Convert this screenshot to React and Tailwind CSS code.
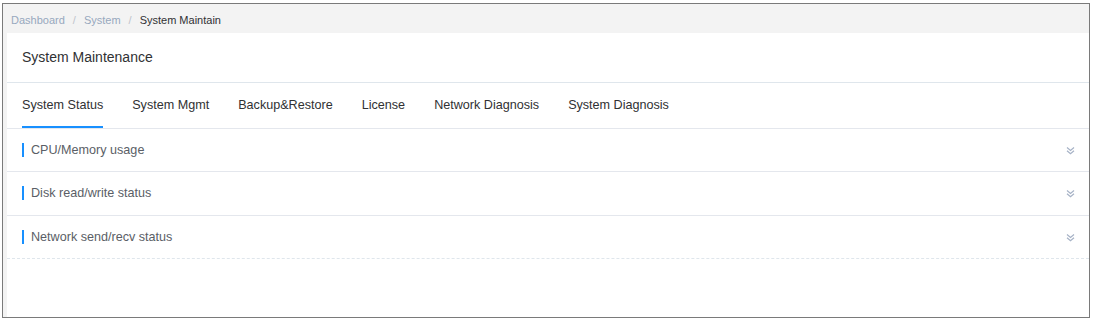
const tabs = ['System Status', 'System Mgmt', 'Backup&Restore', 'License', 'Network Diagnosis', 'System Diagnosis']

const rows = [
  { label: 'CPU/Memory usage', h: 'h-[43px]' },
  { label: 'Disk read/write status', h: 'h-[44px]' },
  { label: 'Network send/recv status', h: 'h-[43px]' },
]

function DoubleDown() {
  return (
    <svg width="9" height="9" viewBox="0 0 9 9" fill="none" stroke="#a6b2c6" strokeWidth="1.2">
      <path d="M1 1.5 L4.5 4.5 L8 1.5" />
      <path d="M1 4.8 L4.5 7.8 L8 4.8" />
    </svg>
  )
}

export default function App() {
  return (
    <div className="w-[1093px] h-[321px] bg-white pt-[3px] pl-[2px] font-['Liberation_Sans',Arial,sans-serif]">
      <div className="w-[1088px] h-[315px] border border-[#7a7a7a] bg-[#f3f3f3] flex flex-col">
        <div className="h-[29px] flex items-center pt-[3px] pl-[8px] text-[11px]">
          <span className="text-[#97a8be]">Dashboard</span>
          <span className="mx-[8px] text-[#c0c4cc]">/</span>
          <span className="text-[#97a8be]">System</span>
          <span className="mx-[8px] text-[#c0c4cc]">/</span>
          <span className="text-[#303133]">System Maintain</span>
        </div>
        <div className="flex-1 ml-[4px] bg-white">
          <div className="h-[50px] flex items-center px-[15px] border-b border-[#dfe6ec] text-[14px] text-[#303133]">
            System Maintenance
          </div>
          <div className="flex gap-[29px] px-[15px] border-b border-[#e4e7ed]">
            {tabs.map((t, i) => (
              <div
                key={t}
                className={
                  'h-[45px] pt-[1px] flex items-center text-[12.6px] text-[#303133] border-b-2 ' +
                  (i === 0 ? 'border-[#1890ff]' : 'border-transparent')
                }
              >
                {t}
              </div>
            ))}
          </div>
          {rows.map((r, i) => (
            <div
              key={r.label}
              className={
                r.h + ' flex items-center justify-between pl-[15px] pr-[14px] border-b ' +
                (i === rows.length - 1 ? 'border-dashed border-[#dfe6ec]' : 'border-[#e4e7ed]')
              }
            >
              <div className="flex items-center">
                <span className="w-[2px] h-[14px] bg-[#1890ff]"></span>
                <span className="ml-[7px] text-[12.6px] text-[#5a5e66]">{r.label}</span>
              </div>
              <DoubleDown />
            </div>
          ))}
        </div>
      </div>
    </div>
  )
}
